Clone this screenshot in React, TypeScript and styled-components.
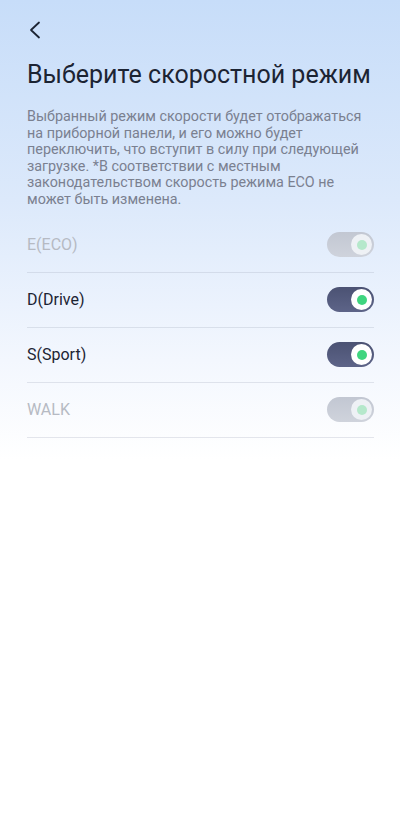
import React, { FC } from 'react';
import styled, { createGlobalStyle } from 'styled-components';

const GlobalStyle = createGlobalStyle`
  html, body {
    margin: 0;
    padding: 0;
    background: #ffffff;
  }
  body {
    font-family: Roboto, "Noto Sans", "Liberation Sans", sans-serif;
  }
`;

const Page = styled.div`
  width: 400px;
  min-height: 814px;
  box-sizing: border-box;
  background: linear-gradient(180deg, #c7ddf9 0px, #dce9fb 200px, #f3f7fe 360px, #ffffff 460px);
  padding: 0 26px 0 27px;
  display: flex;
  flex-direction: column;
`;

const TopBar = styled.div`
  height: 60px;
  display: flex;
  align-items: center;
`;

const BackButton = styled.button`
  border: none;
  background: none;
  padding: 0;
  width: 12px;
  height: 18px;
  display: flex;
  align-items: center;
  justify-content: center;
  margin-left: 2px;
  cursor: pointer;
`;

const Title = styled.h1`
  margin: -1px 0 0;
  font-size: 25px;
  font-weight: 400;
  line-height: 32px;
  color: #1c2433;
  white-space: nowrap;
`;

const Description = styled.p`
  margin: 18px 0 0;
  font-size: 14.35px;
  line-height: 16.6px;
  color: #7a8090;
`;

const List = styled.div`
  margin-top: 9px;
  display: flex;
  flex-direction: column;
`;

const Row = styled.div`
  height: 55px;
  display: flex;
  align-items: center;
  justify-content: space-between;
  border-bottom: 1px solid rgba(160, 170, 185, 0.28);
  box-sizing: border-box;
`;

const Label = styled.span<{ $disabled: boolean }>`
  font-size: 16px;
  color: ${(p) => (p.$disabled ? '#b6bac3' : '#1c2433')};
`;

const Track = styled.div<{ $disabled: boolean }>`
  width: 47px;
  height: 25px;
  border-radius: 13px;
  box-sizing: border-box;
  padding: 2px;
  display: flex;
  align-items: center;
  justify-content: flex-end;
  background: ${(p) =>
    p.$disabled
      ? 'linear-gradient(180deg, #c2c7d2, #cfd3dc)'
      : 'linear-gradient(180deg, #4b5273, #5d6488)'};
`;

const Knob = styled.div<{ $disabled: boolean }>`
  width: 21px;
  height: 21px;
  border-radius: 50%;
  background: ${(p) => (p.$disabled ? '#eef1f5' : '#ffffff')};
  display: flex;
  align-items: center;
  justify-content: center;
`;

const Dot = styled.div<{ $disabled: boolean }>`
  width: 10px;
  height: 10px;
  border-radius: 50%;
  background: ${(p) => (p.$disabled ? '#b5e8cb' : '#3fd57f')};
`;

interface IMode {
  label: string;
  disabled: boolean;
}

const modes: IMode[] = [
  { label: 'E(ECO)', disabled: true },
  { label: 'D(Drive)', disabled: false },
  { label: 'S(Sport)', disabled: false },
  { label: 'WALK', disabled: true },
];

const Toggle: FC<{ disabled: boolean }> = ({ disabled }) => (
  <Track $disabled={disabled}>
    <Knob $disabled={disabled}>
      <Dot $disabled={disabled} />
    </Knob>
  </Track>
);

const App: FC = () => (
  <>
    <GlobalStyle />
    <Page>
      <TopBar>
        <BackButton aria-label="Назад">
          <svg width="12" height="18" viewBox="0 0 12 18" fill="none">
            <path d="M10 1.5L2 9L10 16.5" stroke="#1c2433" strokeWidth="1.8" strokeLinecap="round" strokeLinejoin="round" />
          </svg>
        </BackButton>
      </TopBar>
      <Title>Выберите скоростной режим</Title>
      <Description>
        Выбранный режим скорости будет отображаться на приборной панели, и его можно будет
        переключить, что вступит в силу при следующей загрузке. *В соответствии с местным
        законодательством скорость режима ECO не может быть изменена.
      </Description>
      <List>
        {modes.map((m) => (
          <Row key={m.label}>
            <Label $disabled={m.disabled}>{m.label}</Label>
            <Toggle disabled={m.disabled} />
          </Row>
        ))}
      </List>
    </Page>
  </>
);

export default App;
